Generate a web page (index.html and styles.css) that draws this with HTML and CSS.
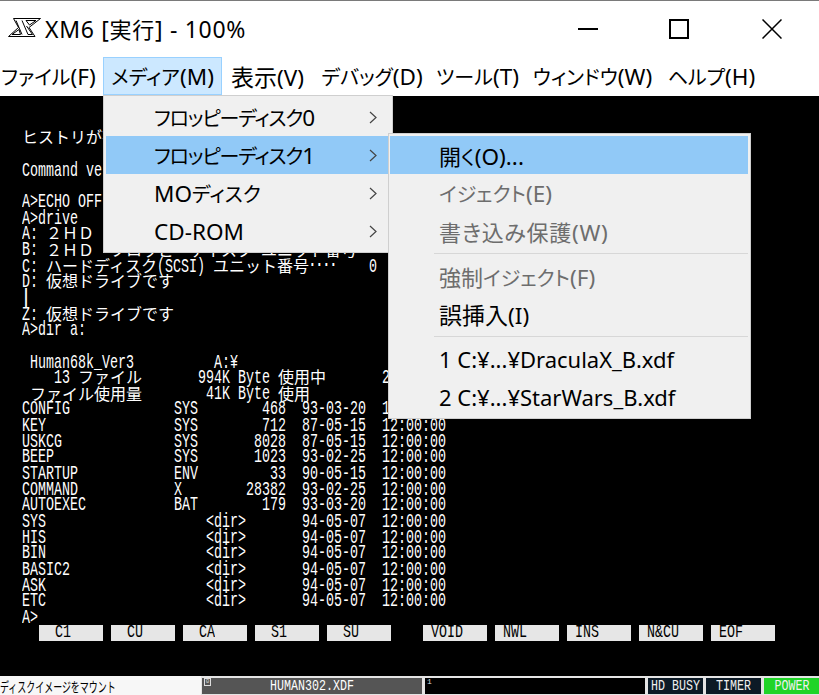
FILE: index.html
```html
<!DOCTYPE html>
<html lang="ja">
<head>
<meta charset="utf-8">
<title>XM6</title>
<link rel="stylesheet" href="styles.css">
</head>
<body>
<div class="window">
  <header class="titlebar">
    <svg class="logo" width="33" height="19" viewBox="0 0 33 19" fill="none" stroke="#000" stroke-width="1">
      <path d="M5.5 .5H32.5L21 9.5 27 18.5H.5L10.5 9.5Z"/>
      <path d="M8 2.5 14 16.5"/>
      <path d="M4 16.5H12.5L11 11.5Z"/>
      <path d="M18 2.5H28L21.5 7Z"/>
      <path d="M14 2.5 20 16.5H24.5L18.5 8"/>
    </svg>
    <div class="title">XM6 [<span class="kj">実行</span>] - 100%</div>
    <div class="controls">
      <svg class="ctl ctl-min" width="20" height="2" viewBox="0 0 20 2"><path d="M0 1H20" stroke="#000" stroke-width="2"/></svg>
      <svg class="ctl ctl-max" width="20" height="20" viewBox="0 0 20 20"><rect x="1" y="1" width="18" height="18" fill="none" stroke="#000" stroke-width="2"/></svg>
      <svg class="ctl ctl-close" width="20" height="20" viewBox="0 0 20 20"><path d="M.5 .5 19.5 19.5M19.5 .5 .5 19.5" stroke="#000" stroke-width="1.5"/></svg>
    </div>
  </header>
  <nav class="menubar">
    <span class="mi mi-file"><span>ファイル<span class="a">(F)</span></span></span>
    <span class="mi mi-media"><span>メディア<span class="a">(M)</span></span></span>
    <span class="mi mi-view"><span><span class="kj kj-lg">表示</span><span class="a">(V)</span></span></span>
    <span class="mi mi-debug"><span>デバッグ<span class="a">(D)</span></span></span>
    <span class="mi mi-tool"><span>ツール<span class="a">(T)</span></span></span>
    <span class="mi mi-win"><span>ウィンドウ<span class="a">(W)</span></span></span>
    <span class="mi mi-help"><span>ヘルプ<span class="a">(H)</span></span></span>
  </nav>
  <main class="screen">
    <div class="term">
<div class="r"><span class="k">ヒストリが有効です</span></div>
<div class="r"> </div>
<div class="r">Command version 3.02</div>
<div class="r"> </div>
<div class="r">A&gt;ECHO OFF</div>
<div class="r">A&gt;drive</div>
<div class="r">A: <span class="k">２ＨＤ</span>  <span class="k">フロッピーディスク</span> <span class="k">ユニット番号</span>････    0</div>
<div class="r">B: <span class="k">２ＨＤ</span>  <span class="k">フロッピーディスク</span> <span class="k">ユニット番号</span>････    1</div>
<div class="r">C: <span class="k">ハードディスク</span>(SCSI) <span class="k">ユニット番号</span>････    0</div>
<div class="r">D: <span class="k">仮想ドライブです</span></div>
<div class="r"><b>|</b></div>
<div class="r">Z: <span class="k">仮想ドライブです</span></div>
<div class="r">A&gt;dir a:</div>
<div class="r"> </div>
<div class="r"> Human68k_Ver3          A:¥</div>
<div class="r">    13 <span class="k">ファイル</span>       994K Byte <span class="k">使用中</span>       2</div>
<div class="r"> <span class="k">ファイル使用量</span>        41K Byte <span class="k">使用</span></div>
<div class="r">CONFIG             SYS        468  93-03-20  12:00:00</div>
<div class="r">KEY                SYS        712  87-05-15  12:00:00</div>
<div class="r">USKCG              SYS       8028  87-05-15  12:00:00</div>
<div class="r">BEEP               SYS       1023  93-02-25  12:00:00</div>
<div class="r">STARTUP            ENV         33  90-05-15  12:00:00</div>
<div class="r">COMMAND            X        28382  93-02-25  12:00:00</div>
<div class="r">AUTOEXEC           BAT        179  93-03-20  12:00:00</div>
<div class="r">SYS                    &lt;dir&gt;       94-05-07  12:00:00</div>
<div class="r">HIS                    &lt;dir&gt;       94-05-07  12:00:00</div>
<div class="r">BIN                    &lt;dir&gt;       94-05-07  12:00:00</div>
<div class="r">BASIC2                 &lt;dir&gt;       94-05-07  12:00:00</div>
<div class="r">ASK                    &lt;dir&gt;       94-05-07  12:00:00</div>
<div class="r">ETC                    &lt;dir&gt;       94-05-07  12:00:00</div>
<div class="r">A&gt;</div>
    </div>
    <div class="fkeys">
      <div class="fgroup fgroup-a">
        <span class="fk"><span class="fl">C1</span></span>
        <span class="fk"><span class="fl">CU</span></span>
        <span class="fk"><span class="fl">CA</span></span>
        <span class="fk"><span class="fl">S1</span></span>
        <span class="fk"><span class="fl">SU</span></span>
      </div>
      <div class="fgroup fgroup-b">
        <span class="fk"><span class="fl">VOID</span></span>
        <span class="fk"><span class="fl">NWL</span></span>
        <span class="fk"><span class="fl">INS</span></span>
        <span class="fk"><span class="fl">N&amp;CU</span></span>
        <span class="fk"><span class="fl">EOF</span></span>
      </div>
    </div>
  </main>
  <footer class="status">
    <div class="st st-msg"><span class="squeeze">ディスクイメージをマウント</span></div>
    <div class="st st-d0"><span class="dn dn-box">0</span><span class="tall">HUMAN302.XDF</span></div>
    <div class="st st-d1"><span class="dn">1</span></div>
    <div class="st st-led"><span class="tall">HD BUSY</span></div>
    <div class="st st-led st-timer"><span class="tall">TIMER</span></div>
    <div class="st st-led st-power"><span class="tall">POWER</span></div>
  </footer>
</div>

<div class="menu menu-main">
  <div class="item tight"><span>フロッピーディスク<span class="a">0</span></span><svg class="chev" width="8" height="13" viewBox="0 0 8 13"><path d="M1 1 7 6.5 1 12" fill="none" stroke="#444" stroke-width="1.2"/></svg></div>
  <div class="item tight on"><span>フロッピーディスク<span class="a">1</span></span><svg class="chev" width="8" height="13" viewBox="0 0 8 13"><path d="M1 1 7 6.5 1 12" fill="none" stroke="#444" stroke-width="1.2"/></svg></div>
  <div class="item"><span><span class="a">MO</span>ディスク</span><svg class="chev" width="8" height="13" viewBox="0 0 8 13"><path d="M1 1 7 6.5 1 12" fill="none" stroke="#444" stroke-width="1.2"/></svg></div>
  <div class="item"><span class="a">CD-ROM</span><svg class="chev" width="8" height="13" viewBox="0 0 8 13"><path d="M1 1 7 6.5 1 12" fill="none" stroke="#444" stroke-width="1.2"/></svg></div>
</div>
<div class="menu menu-sub">
  <div class="item on"><span><span class="kj">開</span>く<span class="a">(O)...</span></span></div>
  <div class="item off"><span>イジェクト<span class="a">(E)</span></span></div>
  <div class="item off"><span class="kj wide">書き込み保護<span class="a">(W)</span></span></div>
  <div class="sep"></div>
  <div class="item off"><span><span class="kj">強制</span>イジェクト<span class="a">(F)</span></span></div>
  <div class="item"><span><span class="kj kj-lg">誤挿入</span><span class="a">(I)</span></span></div>
  <div class="sep"></div>
  <div class="item"><span class="a fn">1 C:¥...¥DraculaX_B.xdf</span></div>
  <div class="item"><span class="a fn">2 C:¥...¥StarWars_B.xdf</span></div>
</div>
</body>
</html>
```
FILE: styles.css
```css
* { box-sizing: border-box; }
html, body { margin: 0; padding: 0; height: 100%; overflow: hidden; background: #fff; }
body { font-family: "Noto Sans CJK JP", "Noto Sans", sans-serif; color: #000; position: relative; }

.a { font-family: "Noto Sans", sans-serif; font-size: 22.5px; }
.a.fn { font-size: 22px; }
.kj { font-size: 22px; }
.kj-lg { font-size: 23px; }
.wide { letter-spacing: .7px; }

.window { width: 819px; height: 695px; display: flex; flex-direction: column; border-top: 1px solid #7a7a7a; }

.titlebar { height: 56px; display: flex; align-items: flex-start; flex: none; }
.logo { margin: 17px 0 0 8px; flex: none; }
.title { margin: 12px 0 0 4px; font-size: 23px; line-height: 32px; letter-spacing: .7px; font-family: "Noto Sans", "Noto Sans CJK JP", sans-serif; white-space: nowrap; font-feature-settings: "palt"; }
.controls { margin-left: auto; position: relative; height: 56px; width: 260px; display: flex; align-items: flex-start; }
.ctl { flex: none; display: block; }
.ctl-min { margin: 27px 0 0 19px; }
.ctl-max { margin: 18px 0 0 71px; }
.ctl-close { margin: 18px 0 0 73px; }

.menubar { height: 39px; display: flex; align-items: stretch; flex: none; font-size: 20px; white-space: nowrap; font-feature-settings: "palt"; }
.mi { display: flex; align-items: center; justify-content: center; flex: none; height: 38px; }
.mi-file { width: 97px; margin-left: 0; }
.mi-media { width: 119px; margin-left: 6px; background: #cce8ff; border: 1px solid #99d1ff; }
.mi-view { width: 75px; margin-left: 8px; }
.mi-debug { width: 104px; margin-left: 15px; }
.mi-tool { width: 79px; margin-left: 14px; }
.mi-win { width: 119px; margin-left: 16px; }
.mi-help { width: 87px; margin-left: 16px; }

.screen { flex: 1; background: #000; color: #fff; position: relative; min-height: 0; overflow: hidden; }
.term { padding: 23.3333px 0 0 22px; margin-bottom: 175px; transform: scaleY(1.5); transform-origin: 0 0; font-family: "Liberation Mono", monospace; font-size: 13.3333px; }
.r { height: 10.6667px; line-height: 10.6667px; white-space: pre; }
.k { display: inline-block; vertical-align: top; font-family: "Noto Sans CJK JP", sans-serif; font-size: 16px; height: 10.6667px; line-height: 10.6667px; transform: translateY(-1.3px) scaleY(.6667); transform-origin: 0 50%; }

.fkeys { display: flex; padding: 0 0 0 39px; gap: 32px; }
.fgroup { display: flex; gap: 8px; }
.fk { width: 64px; height: 16px; background: #e6e6e6; color: #000; font-family: "Liberation Mono", monospace; font-size: 13.3333px; line-height: 16px; }
.fgroup-a .fk { padding-left: 16px; }
.fgroup-b .fk { padding-left: 8px; }
.fl { display: inline-block; transform: scaleY(1.4); transform-origin: 50% 50%; }

.status { height: 19px; flex: none; display: flex; background: #e4e4e4; line-height: 16px; white-space: nowrap; }
.st { height: 16px; margin-top: 2px; flex: none; position: relative; display: flex; align-items: center; justify-content: center; font-family: "Liberation Mono", monospace; font-size: 11.6667px; }
.tall { display: inline-block; transform: scaleY(1.3); }
.squeeze { display: inline-block; font-family: "Noto Sans CJK JP", sans-serif; font-size: 14px; transform: scaleX(.64); transform-origin: 0 50%; }
.st-msg { width: 201px; height: 19px; margin-top: 0; background: #f7f7f7; justify-content: flex-start; }
.st-d0 { width: 220px; margin-left: 1px; background: #555; color: #fff; }
.st-d1 { width: 220px; margin-left: 3px; background: #000; color: #ddd; }
.dn { position: absolute; left: 2px; top: 0; font-size: 8px; line-height: 8px; color: #ddd; }
.dn-box { width: 7px; height: 8px; border: 1px solid #ddd; font-size: 6px; line-height: 6px; text-align: center; color: #ddd; }
.st-led { width: 55px; margin-left: 3px; background: #0c1a26; color: #f0f0f0; }
.st-power { background: #20d428; width: 56px; }

.menu { position: absolute; background: #f0f0f0; border: 1px solid #cfcfcf; font-size: 20px; font-feature-settings: "palt"; padding: 2px; }
.menu-main { left: 103px; top: 95px; width: 290px; height: 158px; }
.menu-sub { left: 388px; top: 133px; width: 363px; height: 286px; padding: 2px 2px 2px 1px; }
.item { height: 38px; display: flex; align-items: center; white-space: nowrap; position: relative; }
.item.tight { letter-spacing: -1.2px; }
.menu-main .item { padding-left: 48px; }
.menu-sub .item { padding-left: 49px; }
.item.on { background: #91c9f7; }
.item.off { color: #6d6d6d; }
.chev { position: absolute; left: 263px; top: 13px; }
.sep { height: 1px; background: #d7d7d7; margin: 3px 0 3px 44px; }
```
